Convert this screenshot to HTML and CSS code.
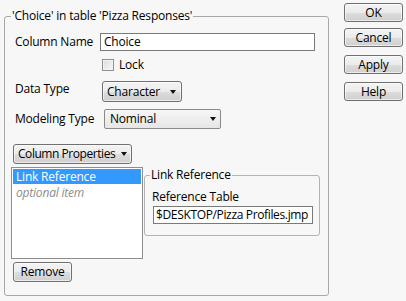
FILE: index.html
```html
<!DOCTYPE html>
<html>
<head>
<meta charset="utf-8">
<link rel="stylesheet" href="styles.css">
</head>
<body>
<div class="dialog">
  <fieldset class="group main">
    <legend class="legend">'Choice' in table 'Pizza Responses'</legend>
    <div class="row row-name">
      <span class="label">Column Name</span>
      <span class="textbox name-box">Choice</span>
    </div>
    <div class="row row-lock">
      <span class="label"></span>
      <span class="check"></span>
      <span class="check-label">Lock</span>
    </div>
    <div class="row row-type">
      <span class="label label-top">Data Type</span>
      <span class="btn combo type-combo"><span class="combo-text">Character</span><span class="arrow"></span></span>
    </div>
    <div class="row row-model">
      <span class="label">Modeling Type</span>
      <span class="combo2 model-combo"><span class="combo-text">Nominal</span><span class="arrow"></span></span>
    </div>
    <div class="btn props-btn"><span class="combo-text">Column Properties</span><span class="arrow"></span></div>
    <div class="props">
      <div class="list">
        <div class="item selected">Link Reference</div>
        <div class="item optional">optional item</div>
      </div>
      <fieldset class="group link">
        <legend class="legend">Link Reference</legend>
        <div class="ref-label">Reference Table</div>
        <div class="textbox ref-box">$DESKTOP/Pizza Profiles.jmp</div>
      </fieldset>
    </div>
    <div class="btn remove-btn">Remove</div>
  </fieldset>
  <div class="side">
    <div class="btn side-btn ok">OK</div>
    <div class="btn side-btn">Cancel</div>
    <div class="btn side-btn">Apply</div>
    <div class="btn side-btn">Help</div>
  </div>
</div>
</body>
</html>
```

FILE: styles.css
```css
* { box-sizing: border-box; }
html, body {
  margin: 0;
  padding: 0;
  background: #f7f7f7;
}
body {
  font-family: "Open Sans", "Noto Sans", sans-serif;
  font-size: 12px;
  line-height: 16px;
  letter-spacing: -0.2px;
  color: #000;
}
.dialog {
  display: flex;
  align-items: flex-start;
  padding: 0 0 0 4px;
}
.group {
  margin: 0;
  border: 1px solid #a9a9a9;
  border-radius: 3px;
  min-width: 0;
}
.legend {
  padding: 0 1px;
  line-height: 16px;
  white-space: nowrap;
}
.main {
  margin-top: 8px;
  width: 325px;
  height: 288px;
  padding: 0 0 0 6px;
  display: flex;
  flex-direction: column;
  align-items: flex-start;
}
.row {
  display: flex;
  align-items: center;
}
.label {
  width: 85px;
  margin-left: 4px;
  flex: none;
}
.row-name { margin-top: 9px; }
.textbox {
  display: block;
  background: #fff;
  border: 1px solid #7a7a7a;
  height: 18px;
  line-height: 16px;
  padding: 0 3px;
  white-space: nowrap;
}
.name-box { width: 215px; }
.row-lock { margin-top: 7px; height: 13px; }
.check {
  width: 12px;
  height: 12px;
  margin-left: 2px;
  border: 1px solid #8e8f8f;
  background: linear-gradient(135deg, #dcdcdc, #f8f8f8);
  box-shadow: inset 0 0 0 1px #f4f4f4;
}
.check-label { margin-left: 5px; }
.row-type { margin-top: 10px; align-items: flex-start; }
.label-top { margin-top: 0; }
.btn {
  display: flex;
  align-items: center;
  justify-content: center;
  border: 1px solid #707070;
  border-radius: 3px;
  background: linear-gradient(#f4f4f4 0%, #ebebeb 50%, #dddddd 51%, #cfcfcf 100%);
  box-shadow: inset 0 0 0 1px rgba(255,255,255,0.6);
  white-space: nowrap;
}
.combo {
  justify-content: space-between;
  padding: 0 5px 0 4px;
}
.type-combo {
  width: 80px;
  height: 21px;
  margin-left: 2px;
}
.arrow {
  width: 0;
  height: 0;
  border-left: 3.5px solid transparent;
  border-right: 3.5px solid transparent;
  border-top: 4px solid #111;
  flex: none;
}
.row-model { margin-top: 7px; }
.combo2 {
  display: flex;
  align-items: center;
  justify-content: space-between;
  width: 117px;
  height: 20px;
  margin-left: 4px;
  padding: 0 4px 0 5px;
  border: 1px solid #8a8a8a;
  border-radius: 2px;
  background: linear-gradient(#f6f6f6, #e6e6e6);
}
.props-btn {
  margin-top: 15px;
  margin-left: 2px;
  width: 119px;
  height: 20px;
  justify-content: space-between;
  padding: 0 4px 0 4px;
  letter-spacing: -0.45px;
}
.props {
  display: flex;
  align-items: flex-start;
  margin-top: 3px;
}
.list {
  width: 132px;
  height: 92px;
  background: #fff;
  border: 1px solid #8e8e8e;
  padding: 1px;
}
.item {
  height: 15px;
  line-height: 15px;
  padding-left: 3px;
  white-space: nowrap;
}
.selected {
  background: #3399ff;
  color: #fff;
}
.optional {
  color: #8c8c8c;
  font-style: italic;
  margin-top: 1px;
}
.link {
  margin-left: 1px;
  width: 176px;
  height: 69px;
  padding: 0 0 0 7px;
  border-color: #b4b4b4;
}
.link .legend { margin-left: -2px; }
.ref-label { margin-top: 6px; }
.ref-box {
  width: 160px;
  margin-left: 1px;
  margin-top: 1px;
  padding: 0 2px;
  letter-spacing: -0.35px;
}
.remove-btn {
  margin-top: 3px;
  margin-left: 2px;
  width: 59px;
  height: 20px;
}
.side {
  display: flex;
  flex-direction: column;
  margin-left: 15px;
  padding-top: 3px;
}
.side-btn {
  width: 59px;
  height: 19px;
  margin-bottom: 8px;
}
.side-btn.ok { margin-bottom: 6px; }
```
